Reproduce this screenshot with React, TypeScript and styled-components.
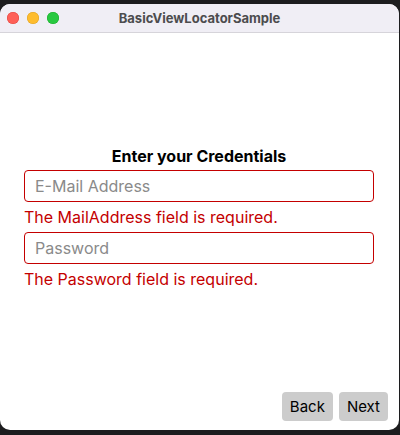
import React from "react";
import styled, { createGlobalStyle } from "styled-components";

const Global = createGlobalStyle`
  html, body { margin: 0; padding: 0; background: #1c1c1e; }
  body { width: 400px; height: 435px; overflow: hidden; font-family: Inter, "Noto Sans", sans-serif; }
`;

const Screen = styled.div`
  width: 400px;
  height: 435px;
  padding-top: 4px;
  box-sizing: border-box;
`;

const Window = styled.div`
  width: 399px;
  height: 426px;
  background: #ffffff;
  border-radius: 10px;
  overflow: hidden;
  display: flex;
  flex-direction: column;
`;

const TitleBar = styled.div`
  height: 28px;
  flex: none;
  background: #f0eef5;
  border-bottom: 1px solid #d6d4da;
  display: flex;
  align-items: center;
  position: relative;
`;

const Lights = styled.div`
  display: flex;
  gap: 8px;
  padding-left: 7px;
`;

const Light = styled.span<{ $c: string; $b: string }>`
  width: 12px;
  height: 12px;
  border-radius: 50%;
  background: ${(p) => p.$c};
  box-shadow: inset 0 0 0 0.5px ${(p) => p.$b};
`;

const Title = styled.div`
  position: absolute;
  left: 0;
  right: 0;
  text-align: center;
  font-size: 13px;
  font-weight: 700;
  color: #4c4c4e;
  pointer-events: none;
`;

const Content = styled.div`
  flex: 1;
  display: flex;
  flex-direction: column;
`;

const Form = styled.div`
  flex: 1;
  display: flex;
  flex-direction: column;
  padding: 113px 25px 0 24px;
`;

const Heading = styled.div`
  font-size: 16px;
  font-weight: 700;
  color: #000;
  text-align: center;
  line-height: 20px;
  margin-bottom: 4px;
`;

const Input = styled.input`
  height: 32px;
  box-sizing: border-box;
  border: 1px solid #c40000;
  border-radius: 4px;
  padding: 0 10px;
  font-family: inherit;
  font-size: 16px;
  color: #000;
  outline: none;
  background: #fff;
  &::placeholder { color: #8a8a8a; }
`;

const Error = styled.div`
  color: #c40000;
  font-size: 16px;
  line-height: 20px;
  padding: 5px 0 5px 0;
`;

const Footer = styled.div`
  display: flex;
  justify-content: flex-end;
  gap: 6px;
  padding: 0 11px 9px 0;
`;

const Button = styled.button`
  height: 29px;
  padding: 0 8px;
  border: none;
  border-radius: 4px;
  background: #cccccc;
  color: #000;
  font-family: inherit;
  font-size: 15px;
`;

export default function App() {
  return (
    <>
      <Global />
      <Screen>
        <Window>
          <TitleBar>
            <Lights>
              <Light $c="#fe5f57" $b="#e0443e" />
              <Light $c="#febc2e" $b="#dea123" />
              <Light $c="#28c840" $b="#1aab29" />
            </Lights>
            <Title>BasicViewLocatorSample</Title>
          </TitleBar>
          <Content>
            <Form>
              <Heading>Enter your Credentials</Heading>
              <Input placeholder="E-Mail Address" />
              <Error>The MailAddress field is required.</Error>
              <Input placeholder="Password" type="password" />
              <Error>The Password field is required.</Error>
            </Form>
            <Footer>
              <Button>Back</Button>
              <Button>Next</Button>
            </Footer>
          </Content>
        </Window>
      </Screen>
    </>
  );
}
